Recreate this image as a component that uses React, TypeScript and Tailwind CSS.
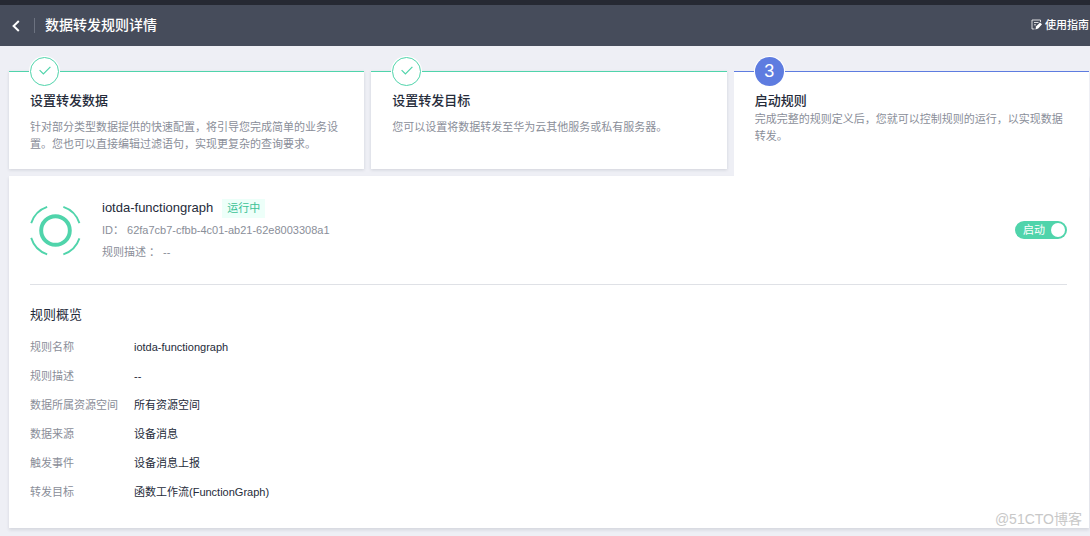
import { useState } from "react";
import type { ReactNode } from "react";

interface Step {
  title: string;
  desc: string;
  done: boolean;
}

const STEPS: Step[] = [
  {
    title: "设置转发数据",
    desc: "针对部分类型数据提供的快速配置，将引导您完成简单的业务设置。您也可以直接编辑过滤语句，实现更复杂的查询要求。",
    done: true,
  },
  { title: "设置转发目标", desc: "您可以设置将数据转发至华为云其他服务或私有服务器。", done: true },
  {
    title: "启动规则",
    desc: "完成完整的规则定义后，您就可以控制规则的运行，以实现数据转发。",
    done: false,
  },
];

const OVERVIEW = [
  ["规则名称", "iotda-functiongraph"],
  ["规则描述", "--"],
  ["数据所属资源空间", "所有资源空间"],
  ["数据来源", "设备消息"],
  ["触发事件", "设备消息上报"],
  ["转发目标", "函数工作流(FunctionGraph)"],
];

function GuideIcon() {
  return (
    <svg viewBox="0 0 11 11" className="size-[11px]" fill="none" stroke="currentColor" aria-hidden="true">
      <path d="M9.5 3V1H1v9h2.5M3 3.5h4.5M3 5.8h2" opacity="0.8" />
      <path d="M4.4 10.4l.8-3.2L9 3.4l2 1.8-3.8 4.4z" fill="currentColor" stroke="none" />
    </svg>
  );
}

function RuleIcon() {
  return (
    <svg viewBox="0 0 52 52" className="size-[51px] shrink-0" fill="none" stroke="#50d4ab" aria-hidden="true">
      <circle cx="26" cy="26" r="14.6" strokeWidth="4" />
      <path
        d="M1.2 18.5A26 26 0 0 1 17.5 1.9M34 1.9a26 26 0 0 1 16.4 16.6M50.4 34A26 26 0 0 1 34 50.3M17.5 50.3A26 26 0 0 1 1.2 33.5"
        strokeWidth="1.9"
      />
    </svg>
  );
}

function Header() {
  return (
    <header className="border-t-5 border-[#262933] bg-[#464c5b] text-white">
      <div className="flex h-[41px] items-center justify-between pr-px pl-3">
        <div className="flex items-center">
          <button type="button" aria-label="返回" className="w-[22px]">
            <svg viewBox="0 0 8 12" className="h-3 w-2" fill="none" stroke="currentColor" strokeWidth="2">
              <path d="M6.8 1 1.6 6l5.2 5" />
            </svg>
          </button>
          <span className="mr-2.5 h-[15px] w-px bg-[#6c7280]" />
          <h1 className="pb-0.5 text-[14px] leading-5 font-medium">数据转发规则详情</h1>
        </div>
        <a href="#guide" className="flex items-center gap-[3px] pb-0.5 text-[11px] leading-4 font-medium">
          <GuideIcon />
          使用指南
        </a>
      </div>
    </header>
  );
}

function StepCard({ step, index }: { step: Step; index: number }) {
  return (
    <li
      className={`border-t bg-white px-[21px] ${
        step.done ? "mb-[7px] h-[98px] border-[#50d4ab] shadow-[0_1px_3px_rgba(37,43,58,0.14)]" : "border-[#5e7ce0]"
      }`}
    >
      <span
        className={`-mt-[15px] flex size-[29px] items-center justify-center rounded-full ring-1 ring-white ${
          step.done ? "border border-[#50d4ab] bg-white text-[#50d4ab]" : "bg-[#5e7ce0] text-[18px] text-white"
        }`}
      >
        {step.done ? (
          <svg viewBox="0 0 12 9" className="mb-0.5 h-[9px] w-3" fill="none" stroke="currentColor" strokeWidth="1.2">
            <path d="M.6 4.2 4.4 8 11.4.8" />
          </svg>
        ) : (
          index + 1
        )}
      </span>
      <h2 className="mt-[5px] text-[13px] leading-5 font-medium">{step.title}</h2>
      <p className={`text-[11px] leading-[17px] text-[#8a8e99] ${step.done ? "mt-2" : ""}`}>{step.desc}</p>
    </li>
  );
}

function Muted({ children }: { children: ReactNode }) {
  return <p className="text-[11px] leading-[22px] text-[#8a8e99]">{children}</p>;
}

function RunSwitch() {
  const [on, setOn] = useState(true);
  return (
    <label
      className={`relative flex h-[18px] w-[52px] cursor-pointer items-center justify-between rounded-full pr-0.5 pl-2 ${
        on ? "bg-[#50d4ab]" : "flex-row-reverse bg-[#adb0b8]"
      }`}
    >
      <input
        type="checkbox"
        role="switch"
        checked={on}
        onChange={(e) => setOn(e.target.checked)}
        className="sr-only"
      />
      <span className="text-[11px] leading-[18px] text-white">{on ? "启动" : "停止"}</span>
      <span className="size-3.5 rounded-full bg-white" />
    </label>
  );
}

export default function App() {
  return (
    <div className="relative min-h-screen bg-[#eeeff5] font-['Liberation_Sans','Noto_Sans_CJK_SC',sans-serif] text-[#252b3a]">
      <Header />

      <main className="pt-[25px] pr-px pb-2 pl-[9px]">
        <ol className="grid grid-cols-3 gap-[7px]">
          {STEPS.map((step, i) => (
            <StepCard key={step.title} step={step} index={i} />
          ))}
        </ol>

        <div className="bg-white pr-[22px] pb-[21px] pl-[21px] shadow-[0_2px_3px_rgba(37,43,58,0.12)]">
          {/* Rule summary */}
          <section className="flex items-center justify-between border-b border-[#dfe1e6] pt-[21px] pb-[21px]">
            <div className="flex items-center gap-[21px]">
              <RuleIcon />
              <div>
                <div className="flex items-center gap-[9px]">
                  <h2 className="text-[13px] leading-[22px]">iotda-functiongraph</h2>
                  <span className="bg-[#edfff9] px-[5px] text-[11px] leading-[19px] text-[#3ac295]">运行中</span>
                </div>
                <Muted>ID： 62fa7cb7-cfbb-4c01-ab21-62e8003308a1</Muted>
                <Muted>规则描述 ： --</Muted>
              </div>
            </div>
            <RunSwitch />
          </section>

          {/* Rule overview */}
          <section className="pt-5">
            <h2 className="text-[13px] leading-5">规则概览</h2>
            <dl className="mt-2 grid grid-cols-[104px_1fr] text-[11px] leading-[29px]">
              {OVERVIEW.map(([label, value]) => (
                <div key={label} className="contents">
                  <dt className="text-[#8a8e99]">{label}</dt>
                  <dd>{value}</dd>
                </div>
              ))}
            </dl>
          </section>
        </div>
      </main>

      <span className="absolute right-2 bottom-[7px] text-[14px] leading-5 text-[#c8c8c8]">@51CTO博客</span>
    </div>
  );
}
